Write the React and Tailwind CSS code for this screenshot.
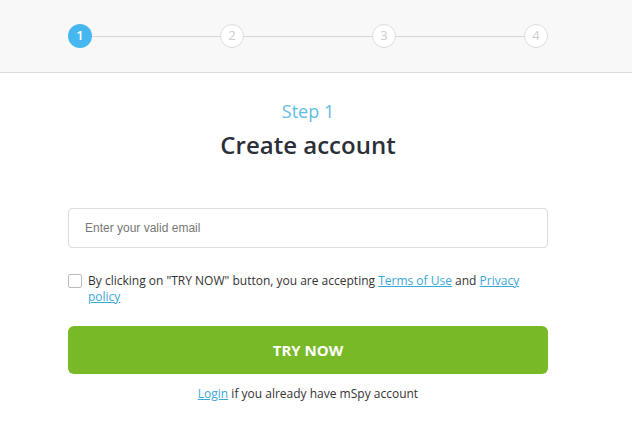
export default function App() {
  const steps = [1, 2, 3, 4];
  return (
    <div className="w-[632px] h-[444px] bg-white" style={{ fontFamily: '"Open Sans", sans-serif' }}>
      <div className="h-[73px] bg-[#f8f8f8] border-b border-[#dcdcdc] flex items-center">
        <div className="ml-[68px] w-[480px] flex items-center">
          {steps.map((s, i) => (
            <div key={s} className={i < 3 ? "flex items-center flex-1" : "flex items-center"}>
              {s === 1 ? (
                <div className="w-6 h-6 rounded-full bg-[#47b8ef] text-white text-[13px] font-semibold flex items-center justify-center">1</div>
              ) : (
                <div className="w-6 h-6 rounded-full bg-white border border-[#dddddd] text-[#cccccc] text-[13px] flex items-center justify-center">{s}</div>
              )}
              {i < 3 && <div className="flex-1 h-px bg-[#d6d6d6]" />}
            </div>
          ))}
        </div>
      </div>
      <div className="ml-[68px] w-[480px] flex flex-col">
        <div className="mt-[25px] text-center text-[18px] leading-[26px] text-[#5fbde3]">Step 1</div>
        <div className="mt-[5px] text-center text-[24px] leading-[32px] font-semibold text-[#2b2f38]">Create account</div>
        <div className="mt-[47px] h-10 border border-[#dddddd] rounded-[4px] flex items-center px-4">
          <span className="text-[12px] text-[#777777]" style={{ fontFamily: '"Liberation Sans", Arial, sans-serif' }}>Enter your valid email</span>
        </div>
        <div className="mt-[25px] flex items-start gap-[6px]">
          <div className="mt-[1px] w-[14px] h-[14px] shrink-0 border border-[#bbbbbb] rounded-[2px] bg-white" />
          <div className="text-[12px] leading-[16px] text-[#333333]">
            By clicking on "TRY NOW" button, you are accepting{" "}
            <span className="text-[#3aa8d8] underline">Terms of Use</span> and{" "}
            <span className="text-[#3aa8d8] underline">Privacy policy</span>
          </div>
        </div>
        <div className="mt-[21px] h-[48px] rounded-[6px] bg-[#78b928] flex items-center justify-center text-white font-bold text-[15px]">TRY NOW</div>
        <div className="mt-[12px] text-center text-[12px] leading-[16px] text-[#333333]">
          <span className="text-[#3aa8d8] underline">Login</span> if you already have mSpy account
        </div>
      </div>
    </div>
  );
}
